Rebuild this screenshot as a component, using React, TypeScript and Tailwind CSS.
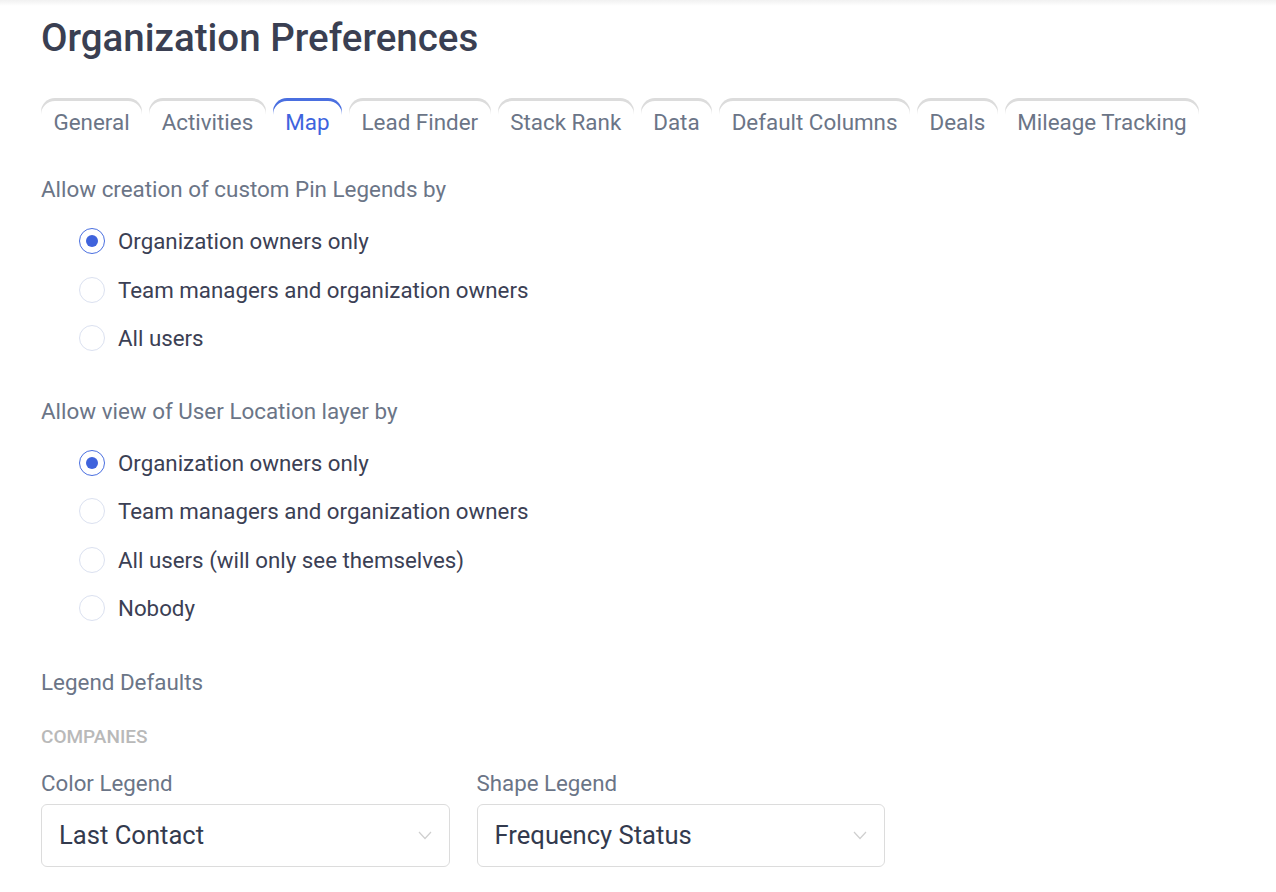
import { useState } from "react";

const tabs = [
  "General",
  "Activities",
  "Map",
  "Lead Finder",
  "Stack Rank",
  "Data",
  "Default Columns",
  "Deals",
  "Mileage Tracking",
];

function Radio({ checked, label, onClick }: { checked: boolean; label: string; onClick: () => void }) {
  return (
    <button type="button" onClick={onClick} className="flex h-[48.5px] items-center gap-[13px] text-left">
      {checked ? (
        <span className="flex h-[26px] w-[26px] items-center justify-center rounded-full border-[1.5px] border-[#4a6fe0] bg-white">
          <span className="h-[12px] w-[12px] rounded-full bg-[#3f63dc]" />
        </span>
      ) : (
        <span className="h-[26px] w-[26px] rounded-full border border-[#dbe1f0] bg-white" />
      )}
      <span className="text-[22.3px] leading-[30px] text-[#3b4054]">{label}</span>
    </button>
  );
}

function RadioGroup({ options }: { options: string[] }) {
  const [value, setValue] = useState(0);
  return (
    <div className="mt-[13px] flex flex-col pl-[38px]">
      {options.map((o, i) => (
        <Radio key={o} label={o} checked={value === i} onClick={() => setValue(i)} />
      ))}
    </div>
  );
}

function Select({ label, value }: { label: string; value: string }) {
  return (
    <div className="flex flex-col">
      <div className="text-[22.3px] leading-[30px] text-[#6b7587]">{label}</div>
      <div className="mt-[6px] flex h-[63px] items-center justify-between rounded-[6px] border border-[#dcdcdc] bg-white pl-[17px] pr-[17px]">
        <span className="text-[25.6px] text-[#333a4e]">{value}</span>
        <svg width="14" height="9" viewBox="0 0 14 9" fill="none">
          <path d="M1 1l6 6.5L13 1" stroke="#cfcfcf" strokeWidth="1.2" />
        </svg>
      </div>
    </div>
  );
}

export default function App() {
  const [active, setActive] = useState(2);
  return (
    <div className="min-h-screen bg-white font-['Roboto',sans-serif]">
      <div className="h-[6px] bg-linear-to-b from-[#f1f1f1] to-white" />
      <div className="pl-[41px]">
        <h1 className="mt-[8px] text-[38.5px] font-medium leading-[48px] text-[#3a3f52]">
          Organization Preferences
        </h1>

        <div className="mt-[36px] flex gap-[7px]">
          {tabs.map((t, i) => (
            <button
              key={t}
              type="button"
              onClick={() => setActive(i)}
              className={
                i === active
                  ? "rounded-t-[14px] px-[12.5px] pt-[9px] pb-[8px] text-[22.4px] leading-[30px] text-[#3e64de] shadow-[inset_0_3px_0_#4a6fe0]"
                  : "rounded-t-[14px] px-[12.5px] pt-[9px] pb-[8px] text-[22.4px] leading-[30px] text-[#6b7587] shadow-[inset_0_3px_0_#dcdcdc]"
              }
            >
              {t}
            </button>
          ))}
        </div>

        <div className="mt-[29px] text-[22.4px] leading-[30px] text-[#6b7587]">
          Allow creation of custom Pin Legends by
        </div>
        <RadioGroup
          options={["Organization owners only", "Team managers and organization owners", "All users"]}
        />

        <div className="mt-[33px] text-[22.4px] leading-[30px] text-[#6b7587]">
          Allow view of User Location layer by
        </div>
        <RadioGroup
          options={[
            "Organization owners only",
            "Team managers and organization owners",
            "All users (will only see themselves)",
            "Nobody",
          ]}
        />

        <div className="mt-[34px] text-[22.4px] leading-[30px] text-[#6b7587]">Legend Defaults</div>
        <div className="mt-[28px] text-[19px] font-medium uppercase leading-[24px] text-[#b9b9b9]">
          Companies
        </div>
        <div className="mt-[19px] grid w-[844px] grid-cols-2 gap-[27px]">
          <Select label="Color Legend" value="Last Contact" />
          <Select label="Shape Legend" value="Frequency Status" />
        </div>
      </div>
    </div>
  );
}
